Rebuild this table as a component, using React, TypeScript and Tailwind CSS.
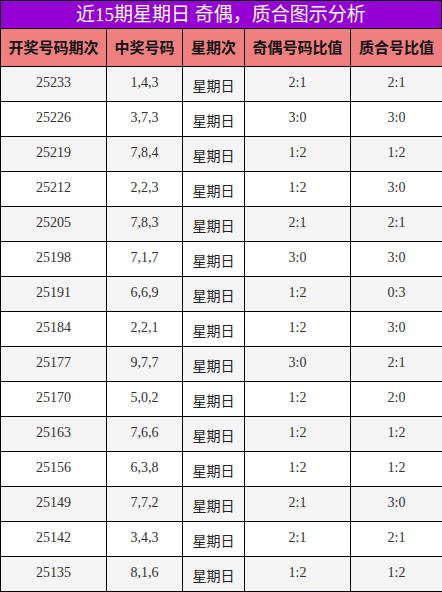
const rows = [
  ["25233", "1,4,3", "2:1", "2:1"],
  ["25226", "3,7,3", "3:0", "3:0"],
  ["25219", "7,8,4", "1:2", "1:2"],
  ["25212", "2,2,3", "1:2", "3:0"],
  ["25205", "7,8,3", "2:1", "2:1"],
  ["25198", "7,1,7", "3:0", "3:0"],
  ["25191", "6,6,9", "1:2", "0:3"],
  ["25184", "2,2,1", "1:2", "3:0"],
  ["25177", "9,7,7", "3:0", "2:1"],
  ["25170", "5,0,2", "1:2", "2:0"],
  ["25163", "7,6,6", "1:2", "1:2"],
  ["25156", "6,3,8", "1:2", "1:2"],
  ["25149", "7,7,2", "2:1", "3:0"],
  ["25142", "3,4,3", "2:1", "2:1"],
  ["25135", "8,1,6", "1:2", "1:2"],
];

const headers = ["开奖号码期次", "中奖号码", "星期次", "奇偶号码比值", "质合号比值"];

export default function App() {
  return (
    <div
      className="w-[442px] bg-white"
      style={{ fontFamily: '"Liberation Serif", "Noto Sans CJK SC", serif' }}
    >
      <div className="flex h-[29px] items-center justify-center border border-black bg-[#9400d3] text-[19px] leading-none text-white">
        近15期星期日 奇偶，质合图示分析
      </div>
      <table className="w-[442px] table-fixed border-collapse">
        <colgroup>
          <col className="w-[106px]" />
          <col className="w-[76px]" />
          <col className="w-[62px]" />
          <col className="w-[106px]" />
          <col className="w-[92px]" />
        </colgroup>
        <thead>
          <tr className="h-[37px] bg-[#f08080]">
            {headers.map((h) => (
              <th
                key={h}
                className="border border-t-0 border-black p-0 text-[15px] font-bold text-[#111]"
                style={{ fontFamily: '"Noto Sans CJK SC", sans-serif' }}
              >
                {h}
              </th>
            ))}
          </tr>
        </thead>
        <tbody>
          {rows.map((r, i) => (
            <tr
              key={r[0]}
              className={`h-[35px] ${i % 2 === 0 ? "bg-[#f5f5f5]" : "bg-white"}`}
            >
              <td className="border border-black p-0 pb-[2px] text-center text-[14px] text-[#333]">
                {r[0]}
              </td>
              <td className="border border-black p-0 pb-[2px] text-center text-[14px] text-[#333]">
                {r[1]}
              </td>
              <td className="border border-black p-0 pt-[4px] text-center text-[14px] text-[#222]">
                <span style={{ fontFamily: '"Noto Sans CJK SC", sans-serif' }}>
                  星期日
                </span>
              </td>
              <td className="border border-black p-0 pb-[2px] text-center text-[14px] text-[#333]">
                {r[2]}
              </td>
              <td className="border border-black p-0 pb-[2px] text-center text-[14px] text-[#333]">
                {r[3]}
              </td>
            </tr>
          ))}
        </tbody>
      </table>
    </div>
  );
}
